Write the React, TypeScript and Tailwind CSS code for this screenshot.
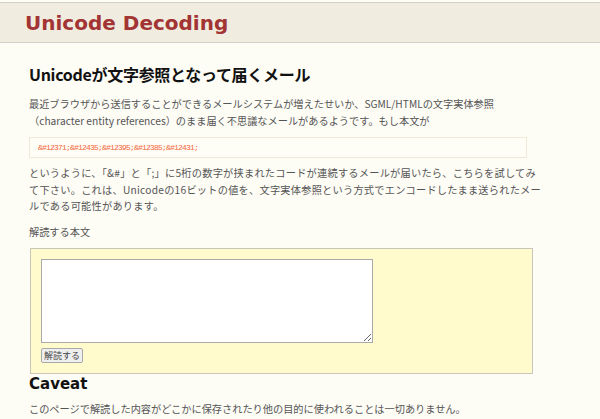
const jp = "font-['Noto_Sans_CJK_JP',sans-serif]";

export default function App() {
  return (
    <div className="min-h-screen bg-[#fdfcf5] pt-[2px]">
      <header className="flex h-[41px] items-center border-y border-[#d2d0c6] bg-[#f0ede0] pl-[25px]">
        <h1 className="font-['DejaVu_Sans',sans-serif] text-[20px] font-bold leading-none text-[#a33434]">
          Unicode Decoding
        </h1>
      </header>

      <main className={`ml-[29px] w-[505px] text-[#555] ${jp}`}>
        <h2 className="mt-[19px] text-[16px] font-bold leading-[24px] tracking-[-0.3px] text-[#111]">
          Unicodeが文字参照となって届くメール
        </h2>

        <p className="mt-[9px] text-[10.2px] leading-[17px]">
          最近ブラウザから送信することができるメールシステムが増えたせいか、SGML/HTMLの文字実体参照（character entity references）のまま届く不思議なメールがあるようです。もし本文が
        </p>

        <div className="mt-[8px] flex h-[21px] w-[498px] items-center border border-[#efe9d9] bg-[#fffef6] pl-[8px]">
          <code className="font-['Liberation_Mono',monospace] text-[8px] tracking-[-0.8px] text-[#f5643c]">
            &amp;#12371;&amp;#12435;&amp;#12395;&amp;#12385;&amp;#12431;
          </code>
        </div>

        <p className="mt-[7px] whitespace-nowrap text-[10.2px] leading-[16.5px] tracking-[0.25px]">
          というように、「&amp;#」と「;」に5桁の数字が挟まれたコードが連続するメールが届いたら、こちらを試してみ
          <br />
          て下さい。これは、Unicodeの16ビットの値を、文字実体参照という方式でエンコードしたまま送られたメー
          <br />
          ルである可能性があります。
        </p>

        <p className="mt-[8px] text-[10.2px] leading-[17px]">解読する本文</p>

        <form className="mt-[8px] ml-px w-[503px] border border-[#c8c6b8] bg-[#fffbcc] px-[10px] pt-[10px] pb-[10px]">
          <textarea className="block h-[84px] w-[332px] border border-[#a9a9a9] bg-white" />
          <button
            type="button"
            className="mt-[5px] flex h-[15px] w-[42px] items-center justify-center rounded-[2px] border border-[#a9a9a9] bg-[#efefef] text-[9px] leading-none text-[#444]"
          >
            解読する
          </button>
        </form>

        <h2 className="font-['DejaVu_Sans',sans-serif] text-[15px] font-bold leading-[20px] text-[#111]">
          Caveat
        </h2>

        <p className="mt-[6px] text-[10.2px] leading-[17px]">
          このページで解読した内容がどこかに保存されたり他の目的に使われることは一切ありません。
        </p>
      </main>
    </div>
  );
}
